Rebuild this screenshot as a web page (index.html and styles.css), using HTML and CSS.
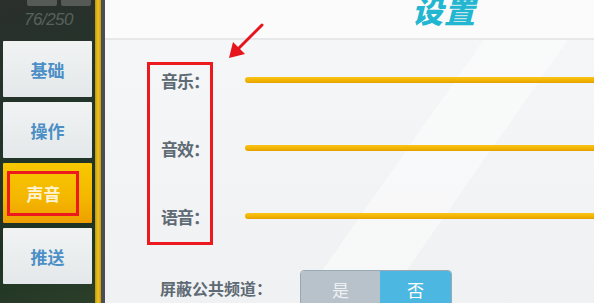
FILE: index.html
```html
<!DOCTYPE html>
<html lang="zh">
  <head>
    <meta charset="UTF-8" />
    <title>设置</title>
    <link rel="stylesheet" href="styles.css">
  </head>
  <body>
    <div class="screen">
      <div class="sidebar">
        <div class="tabs">
          <div class="stats">
            <div class="slots"><span></span><span></span></div>
            <div class="count">76/250</div>
          </div>
          <div class="tab">基础</div>
          <div class="tab">操作</div>
          <div class="tab active"><span class="mark">声音</span></div>
          <div class="tab">推送</div>
        </div>
        <div class="stripe"></div>
        <div class="edge"></div>
      </div>

      <div class="panel">
        <div class="header">
          <div class="title">设置</div>
        </div>

        <svg class="arrow" width="40" height="40" viewBox="0 0 40 40">
          <line x1="36" y1="3" x2="10" y2="29" stroke="#e8141c" stroke-width="3" stroke-linecap="round" />
          <polygon points="3,36 7,20 19,32" fill="#e8141c" />
        </svg>

        <div class="sound">
          <div class="labels">
            <div class="row">音乐：</div>
            <div class="row">音效：</div>
            <div class="row">语音：</div>
          </div>
          <div class="sliders">
            <div class="row"><div class="bar"></div></div>
            <div class="row"><div class="bar"></div></div>
            <div class="row"><div class="bar"></div></div>
          </div>
        </div>

        <div class="channel">
          <div class="channel-label">屏蔽公共频道：</div>
          <div class="toggle">
            <div class="opt">是</div>
            <div class="opt on">否</div>
          </div>
        </div>
      </div>
    </div>
  </body>
</html>
```

FILE: styles.css
```css
body {
  margin: 0;
  font-family: "Noto Sans CJK SC", "Noto Sans", sans-serif;
  overflow: hidden;
}

.screen {
  display: flex;
  width: 594px;
  height: 303px;
}

/* left tab column */
.sidebar {
  display: flex;
  width: 105px;
  flex-shrink: 0;
  background: linear-gradient(160deg, #2a2f2c 0%, #23352a 40%, #1f3324 75%, #2c3f2a 100%);
}

.tabs {
  width: 95px;
  display: flex;
  flex-direction: column;
  gap: 5px;
}

.stats {
  height: 36px;
}

.slots {
  display: flex;
  gap: 4px;
  padding-left: 27px;
}

.slots span {
  width: 30px;
  height: 6px;
  background: #555a57;
  border-radius: 0 0 2px 2px;
}

.count {
  margin: 5px 0 0 24px;
  font-family: "Liberation Sans", sans-serif;
  font-size: 17px;
  font-style: italic;
  color: #56625a;
  line-height: 17px;
  letter-spacing: -0.5px;
}

.tab {
  margin-left: 3px;
  width: 89px;
  height: 56px;
  display: flex;
  align-items: center;
  justify-content: center;
  background: linear-gradient(180deg, #f1f3f3 0%, #e4e8ea 100%);
  color: #4b8fc6;
  font-size: 17px;
  font-weight: 700;
  border-radius: 1px;
}

.tab.active {
  height: 60px;
  background: linear-gradient(180deg, #f8c800 0%, #f4b600 60%, #ee9f00 100%);
  color: #fff3d6;
  justify-content: flex-start;
}

.mark {
  margin-left: 4px;
  width: 65px;
  height: 39px;
  border: 3px solid #ec1a1e;
  display: flex;
  align-items: center;
  justify-content: center;
  padding-left: 1px;
}

.stripe {
  width: 6px;
  background: linear-gradient(90deg, #b89414, #f0c520 50%, #c89c10);
}

.edge {
  width: 4px;
  background: #4a4f55;
}

/* right settings panel */
.panel {
  flex: 1;
  position: relative;
  background:
    linear-gradient(125deg, transparent 58%, rgba(255, 255, 255, 0.45) 58%, rgba(255, 255, 255, 0.45) 70%, transparent 70%),
    linear-gradient(180deg, #f6f7f8 0%, #f0f1f2 100%);
}

.header {
  height: 38px;
  background: #fbfbfb;
  border-bottom: 2px solid #e6e8ea;
  padding-left: 307px;
  overflow: hidden;
}

.title {
  margin-top: -8px;
  font-size: 31px;
  line-height: 36px;
  font-weight: 900;
  font-style: italic;
  color: #22b6d0;
  letter-spacing: 1px;
}

.arrow {
  position: absolute;
  left: 121px;
  top: 22px;
}

.sound {
  display: flex;
  margin-top: 22px;
  margin-left: 42px;
}

.labels {
  width: 60px;
  height: 177px;
  border: 3px solid #ec1a1e;
  display: flex;
  flex-direction: column;
  gap: 38px;
}

.labels .row {
  height: 30px;
  display: flex;
  align-items: center;
  padding-left: 11px;
  font-size: 17px;
  font-weight: 700;
  color: #5e6a74;
  white-space: nowrap;
  letter-spacing: -1px;
}

.sliders {
  flex: 1;
  margin: 3px -10px 0 32px;
  display: flex;
  flex-direction: column;
  gap: 38px;
}

.sliders .row {
  height: 30px;
  display: flex;
  align-items: center;
}

.bar {
  width: 100%;
  height: 6px;
  border-radius: 3px;
  background: linear-gradient(180deg, #f9c419 0%, #f2b200 60%, #e3a000 100%);
}

.channel {
  display: flex;
  align-items: flex-start;
  margin-top: 25px;
  margin-left: 55px;
}

.channel-label {
  width: 140px;
  height: 36px;
  display: flex;
  align-items: center;
  font-size: 16px;
  font-weight: 700;
  color: #5e6a74;
}

.toggle {
  display: flex;
  height: 36px;
  border: 1px solid #9aa8b3;
  border-radius: 4px;
  overflow: hidden;
}

.opt {
  width: 79px;
  display: flex;
  align-items: center;
  justify-content: center;
  background: #b8c2ca;
  color: #eef1f3;
  font-size: 17px;
}

.opt.on {
  width: 71px;
  background: #4cb8e2;
  color: #ffffff;
}
```
